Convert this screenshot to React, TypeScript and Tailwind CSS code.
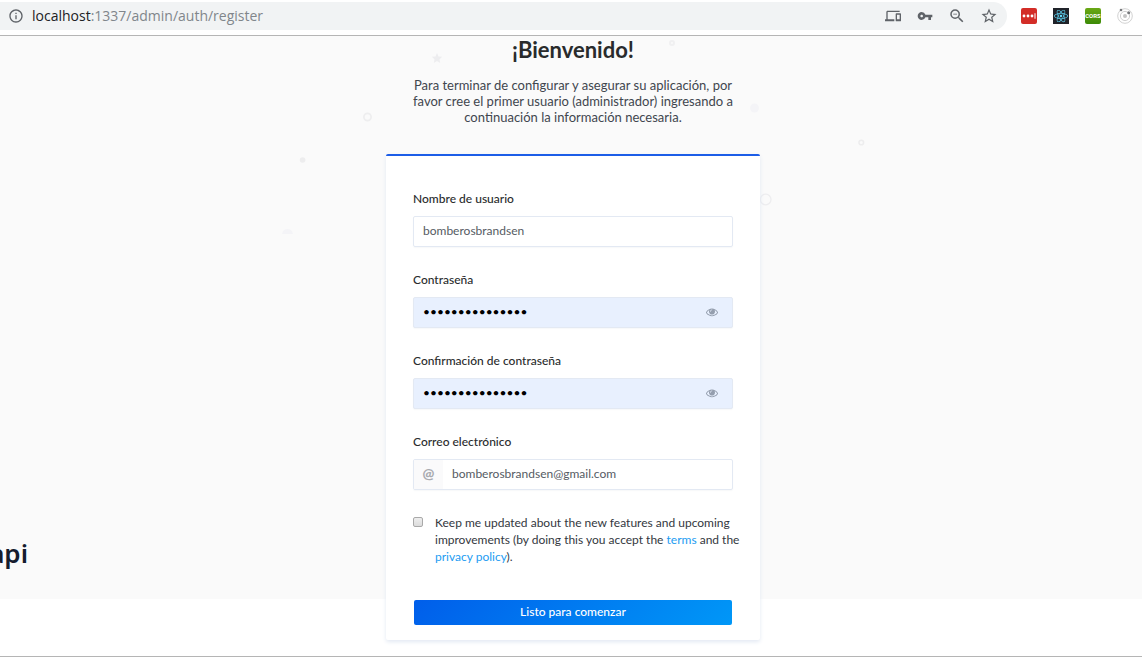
import { useState } from "react";
import type { ReactNode } from "react";
import {
  MdDevices,
  MdInfoOutline,
  MdStarBorder,
  MdVpnKey,
  MdZoomOut,
} from "react-icons/md";
import { FaReact } from "react-icons/fa";

const inputBox =
  "flex h-[31px] overflow-hidden rounded-xs border border-[#e3e9f3] shadow-[0_1px_1px_rgba(104,118,142,0.05)]";

function EyeIcon() {
  return (
    <svg viewBox="0 0 1792 1792" className="size-3" fill="currentColor" aria-hidden="true">
      <path d="M1664 960q-152-236-381-353 61 104 61 225 0 185-131.5 316.5t-316.5 131.5-316.5-131.5-131.5-316.5q0-121 61-225-229 117-381 353 133 205 333.5 326.5t434.5 121.5 434.5-121.5 333.5-326.5zm-720-384q0-20-14-34t-34-14q-125 0-214.5 89.5t-89.5 214.5q0 20 14 34t34 14 34-14 14-34q0-86 61-147t147-61q20 0 34-14t14-34zm848 384q0 34-20 69-140 230-376.5 368.5t-499.5 138.5-499.5-139-376.5-368q-20-35-20-69t20-69q140-229 376.5-368t499.5-139 499.5 139 376.5 368q20 35 20 69z" />
    </svg>
  );
}

function OrbitIcon() {
  return (
    <svg viewBox="0 0 16 16" className="size-4" fill="none" aria-hidden="true">
      <circle cx="8" cy="8" r="7.3" stroke="#d2d2d2" strokeWidth="1" />
      <circle cx="8" cy="8" r="4.6" stroke="#cfcfcf" strokeWidth="1" />
      <circle cx="8" cy="8" r="2" fill="#c4c4c4" />
      <circle cx="4" cy="2" r="1.3" fill="#77797c" />
      <circle cx="11.7" cy="4.8" r="1.5" fill="#77797c" />
    </svg>
  );
}

function BrowserBar() {
  return (
    <header className="flex h-9 items-start border-b border-[#b5b5b5] bg-white pt-0.5">
      <div className="flex h-7 min-w-0 flex-1 items-center rounded-r-full bg-[#f1f3f4] pr-[9px] pl-2 text-[#5f6368]">
        <MdInfoOutline className="size-4 shrink-0" />
        <div className="ml-2 flex-1 truncate font-['Open_Sans',sans-serif] text-sm text-[#80868b]">
          <span className="text-[#202124]">localhost</span>:1337/admin/auth/register
        </div>
        <div className="flex items-center gap-3.5">
          <button type="button" aria-label="Devices" className="flex w-[18px] justify-center"><MdDevices className="size-4" /></button>
          <button type="button" aria-label="Saved passwords" className="flex w-[18px] justify-center"><MdVpnKey className="size-4" /></button>
          <button type="button" aria-label="Zoom"><MdZoomOut className="size-[18px]" /></button>
          <button type="button" aria-label="Bookmark"><MdStarBorder className="size-[18px]" /></button>
        </div>
      </div>
      <div className="flex h-7 items-center gap-4 pr-[9px] pl-3.5">
        <button type="button" aria-label="Password manager" className="size-4 rounded-xs bg-[#d32d27]">
          <svg viewBox="0 0 16 16" className="size-4" fill="#fff" aria-hidden="true">
            <circle cx="3" cy="8" r="1.4" />
            <circle cx="7" cy="8" r="1.4" />
            <circle cx="11" cy="8" r="1.4" />
            <path d="M13.5 5.2h1v5.600h-1z" />
          </svg>
        </button>
        <button type="button" aria-label="React tools" className="flex size-4 items-center justify-center bg-[#20232a] text-[#61dafb]">
          <FaReact className="size-3.5" />
        </button>
        <button type="button" aria-label="Cross origin" className="flex size-4 items-center justify-center rounded-xs bg-linear-to-b from-[#6aa815] to-[#3b8a06] font-['Liberation_Sans_Narrow','Roboto',sans-serif] text-[6px] leading-4 font-bold text-white">
          CORS
        </button>
        <button type="button" aria-label="Orbit"><OrbitIcon /></button>
      </div>
    </header>
  );
}

function Backdrop() {
  return (
    <svg className="pointer-events-none absolute top-0 left-1/2 h-[240px] w-[640px] -translate-x-1/2" viewBox="251 36 640 240" fill="none" aria-hidden="true">
      <path d="M437 53l1.500 3.400 3.700.4-2.700 2.500.7 3.600-3.200-1.800-3.200 1.800.7-3.600-2.700-2.500 3.700-.4z" fill="#ededef" />
      <circle cx="672" cy="43" r="2" stroke="#f0f0f1" strokeWidth="2" />
      <circle cx="754.500" cy="108" r="4.500" fill="#f4f4f7" />
      <circle cx="367.500" cy="117" r="3.600" stroke="#eeeeef" strokeWidth="1.800" />
      <circle cx="861.300" cy="142.500" r="2.300" stroke="#ededee" strokeWidth="1.600" />
      <circle cx="302.600" cy="160" r="2.800" fill="#ededee" />
      <circle cx="765.700" cy="199.500" r="5.300" stroke="#ededef" strokeWidth="1.300" />
      <path d="M282 234q1-5 5.500-5t5.500 5z" fill="#f4f4f7" />
    </svg>
  );
}

function Field({ id, label, children }: { id: string; label: string; children: ReactNode }) {
  return (
    <div>
      <label htmlFor={id} className="mb-2 block text-xs leading-[18px] font-medium text-[#292b2c]">
        {label}
      </label>
      {children}
    </div>
  );
}

function PasswordInput({ id }: { id: string }) {
  const [visible, setVisible] = useState(false);
  return (
    <div className={`${inputBox} bg-[#e8f0fe]`}>
      <input
        id={id}
        type={visible ? "text" : "password"}
        defaultValue="bomberos1234567"
        className="min-w-0 flex-1 px-[9px] pb-px text-xs text-black outline-none"
      />
      <button
        type="button"
        aria-label="Mostrar contraseña"
        onClick={() => setVisible(!visible)}
        className="px-3.5 pb-0.5 text-[#949eae]"
      >
        <EyeIcon />
      </button>
    </div>
  );
}

export default function App() {
  return (
    <div className="min-h-screen border-b border-[#b5b5b5] bg-white font-['Lato',sans-serif]">
      <BrowserBar />
      <main className="relative overflow-hidden bg-[linear-gradient(#fafafa_563px,#ffffff_563px)] px-4 pb-4">
        <Backdrop />
        <div className="absolute top-[497px] left-0 flex w-7 justify-end font-['Noto_Sans',sans-serif] text-[26px] leading-10 font-semibold text-[#151c2e]">
          api
        </div>
        <div className="relative mx-auto w-full max-w-[378px] pl-1">
          <div className="text-center">
            <h1 className="text-[22px] leading-7 font-bold text-[#292b2c]">¡Bienvenido!</h1>
            <p className="mx-auto mt-[13px] max-w-[330px] text-[13px] leading-4 text-[#41464e]">
              Para terminar de configurar y asegurar su aplicación, por favor cree el primer usuario
              (administrador) ingresando a continuación la información necesaria.
            </p>
          </div>
          <form
            onSubmit={(e) => e.preventDefault()}
            className="mt-[29px] rounded-xs border-t-2 border-[#1c5de7] bg-white px-[27px] pt-[34px] pb-[15px] shadow-[0_2px_4px_#e3e9f3]"
          >
            <div className="flex flex-col gap-6">
              <Field id="username" label="Nombre de usuario">
                <div className={inputBox}>
                  <input id="username" defaultValue="bomberosbrandsen" className="min-w-0 flex-1 px-[9px] pb-px text-xs text-[#555b63] outline-none" />
                </div>
              </Field>
              <Field id="password" label="Contraseña">
                <PasswordInput id="password" />
              </Field>
              <Field id="confirm" label="Confirmación de contraseña">
                <PasswordInput id="confirm" />
              </Field>
              <Field id="email" label="Correo electrónico">
                <div className={inputBox}>
                  <span className="flex w-[29px] items-center justify-center bg-[#fafafb] pb-px text-sm font-black text-[#a9abb0]">@</span>
                  <input id="email" type="email" defaultValue="bomberosbrandsen@gmail.com" className="min-w-0 flex-1 px-[9px] pb-px text-xs text-[#555b63] outline-none" />
                </div>
              </Field>
            </div>
            <div className="mt-6 -mr-3 flex items-start">
              <input
                id="news"
                type="checkbox"
                className="mt-[3px] mr-3 size-2.5 shrink-0 appearance-none rounded-xs border border-[#a9a9a9] bg-linear-to-b from-[#eeeeee] to-[#dcdcdc] checked:bg-[#1c5de7]"
              />
              <label htmlFor="news" className="text-xs leading-[17px] text-[#333740]">
                Keep me updated about the new features and upcoming improvements (by doing this you accept the{" "}
                <a href="#terms" className="text-[#1c9cf2]">terms</a> and the{" "}
                <a href="#privacy" className="text-[#1c9cf2]">privacy policy</a>).
              </label>
            </div>
            <div className="mt-[35px] px-px">
              <button
                type="submit"
                className="block h-[25px] w-full rounded-xs bg-linear-[135deg,#005eea_0%,#0097f7_100%] pb-px text-xs font-medium text-white"
              >
                Listo para comenzar
              </button>
            </div>
          </form>
        </div>
      </main>
    </div>
  );
}
